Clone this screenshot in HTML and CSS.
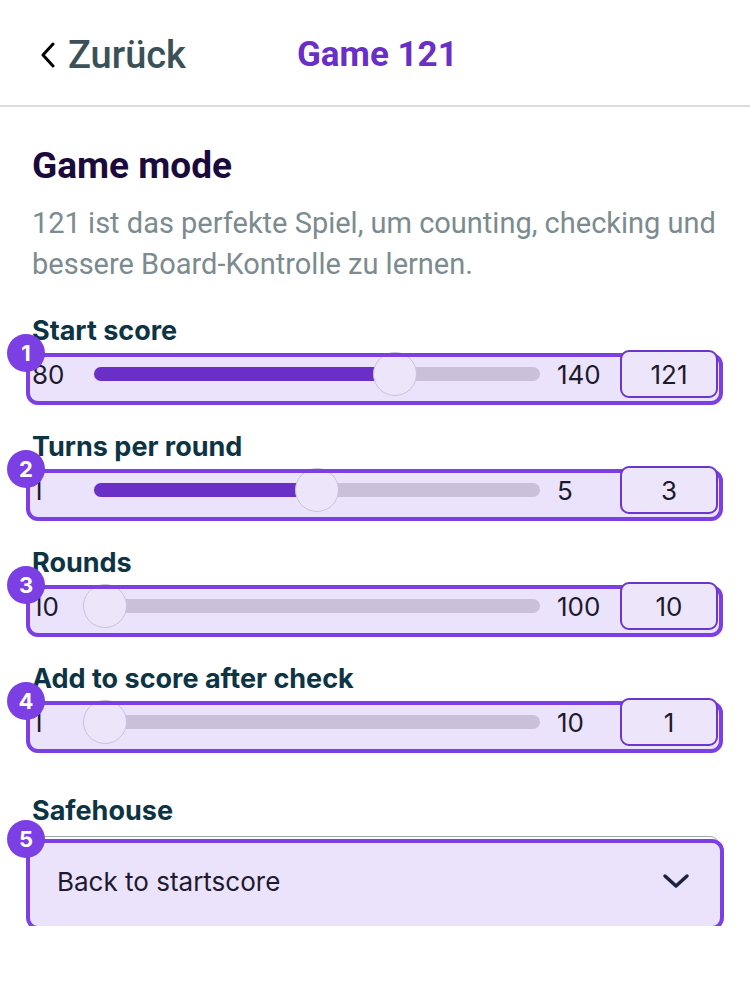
FILE: index.html
```html
<!DOCTYPE html>
<html lang="de">
<head>
    <meta charset="UTF-8">
    <meta name="viewport" content="width=device-width, initial-scale=1.0">
    <title>Game 121</title>
    <link rel="stylesheet" href="styles.css">
</head>
<body>
    <div class="topbar">
        <div class="back">
            <svg class="back-icon" width="16" height="26" viewBox="0 0 16 26">
                <path d="M13 2 L3 13 L13 24" fill="none" stroke="#000" stroke-width="3" stroke-linecap="round" stroke-linejoin="round"/>
            </svg>
            <span>Zurück</span>
        </div>
        <div class="title">Game 121</div>
    </div>

    <div class="content">
        <h1>Game mode</h1>
        <p class="intro">121 ist das perfekte Spiel, um counting, checking und bessere Board-Kontrolle zu lernen.</p>

        <div class="fields">
            <div class="field">
                <div class="label">Start score</div>
                <div class="slider-row">
                    <span class="annot"><span class="badge">1</span></span>
                    <span class="min">80</span>
                    <div class="track" style="--p: 0.683"><div class="fill"></div><div class="thumb"></div></div>
                    <span class="max">140</span>
                    <span class="value">121</span>
                </div>
            </div>

            <div class="field">
                <div class="label">Turns per round</div>
                <div class="slider-row">
                    <span class="annot"><span class="badge">2</span></span>
                    <span class="min">1</span>
                    <div class="track" style="--p: 0.5"><div class="fill"></div><div class="thumb"></div></div>
                    <span class="max">5</span>
                    <span class="value">3</span>
                </div>
            </div>

            <div class="field">
                <div class="label">Rounds</div>
                <div class="slider-row">
                    <span class="annot"><span class="badge">3</span></span>
                    <span class="min">10</span>
                    <div class="track" style="--p: 0"><div class="thumb"></div></div>
                    <span class="max">100</span>
                    <span class="value">10</span>
                </div>
            </div>

            <div class="field">
                <div class="label">Add to score after check</div>
                <div class="slider-row">
                    <span class="annot"><span class="badge">4</span></span>
                    <span class="min">1</span>
                    <div class="track" style="--p: 0"><div class="thumb"></div></div>
                    <span class="max">10</span>
                    <span class="value">1</span>
                </div>
            </div>

            <div class="field field-select">
                <div class="label">Safehouse</div>
                <div class="select">
                    <span class="annot"><span class="badge">5</span></span>
                    <span class="select-text">Back to startscore</span>
                    <svg class="select-icon" width="28" height="16" viewBox="0 0 28 16">
                        <path d="M3 3 L14 13 L25 3" fill="none" stroke="#1c2240" stroke-width="3.5" stroke-linecap="round" stroke-linejoin="round"/>
                    </svg>
                </div>
            </div>
        </div>
    </div>
</body>
</html>
```

FILE: styles.css
```css
body {
    margin: 0;
    background: #fff;
    font-family: Inter, "Noto Sans", sans-serif;
}
.topbar {
    height: 107px;
    box-sizing: border-box;
    padding: 4px 0 0 40px;
    border-bottom: 2px solid #dcdcdc;
    display: flex;
    align-items: center;
}
.back {
    width: 257px;
    display: flex;
    align-items: center;
    gap: 12px;
    font-family: Roboto, sans-serif;
    font-weight: 500;
    font-size: 38px;
    color: #3b5159;
}
.title {
    font-family: Roboto, sans-serif;
    font-weight: 700;
    font-size: 35px;
    color: #6a2fc6;
}
.content {
    padding: 0 32px;
}
h1 {
    margin: 36px 0 0;
    font-family: Roboto, sans-serif;
    font-weight: 700;
    font-size: 37px;
    line-height: 46px;
    color: #1b0b3d;
}
.intro {
    margin: 14px 0 0;
    font-family: Roboto, sans-serif;
    font-size: 29px;
    line-height: 41px;
    color: #7b8b90;
}
.fields {
    margin-top: 30px;
    display: flex;
    flex-direction: column;
    gap: 33px;
}
.label {
    font-weight: 700;
    font-size: 27px;
    line-height: 32px;
    color: #0d3444;
    margin-bottom: 3px;
}
.slider-row {
    position: relative;
    z-index: 0;
    display: flex;
    align-items: center;
    height: 48px;
    font-size: 26px;
    color: #1d1a2c;
}
.annot {
    position: absolute;
    left: -6px;
    right: -5px;
    top: 3px;
    bottom: -7px;
    background: #ebe2fb;
    border-radius: 12px;
}
.annot::after {
    content: "";
    position: absolute;
    inset: 0;
    border: 4px solid #7b3fe4;
    border-radius: 12px;
    z-index: 2;
}
.badge {
    position: absolute;
    left: -19px;
    top: -19px;
    width: 38px;
    height: 38px;
    border-radius: 50%;
    background: #7b3fe4;
    color: #fff;
    font-weight: 700;
    font-size: 22px;
    display: flex;
    align-items: center;
    justify-content: center;
    z-index: 4;
}
.min {
    width: 62px;
    position: relative;
    z-index: 1;
}
.track {
    flex: 1;
    height: 14px;
    border-radius: 7px;
    background: #cac0d9;
    position: relative;
    z-index: 1;
}
.fill {
    position: absolute;
    left: 0;
    top: 0;
    bottom: 0;
    width: calc(11px + var(--p) * (100% - 22px));
    background: #6a2fc6;
    border-radius: 7px;
}
.thumb {
    position: absolute;
    top: 50%;
    left: calc(11px + var(--p) * (100% - 22px));
    width: 44px;
    height: 44px;
    margin: -22px 0 0 -22px;
    box-sizing: border-box;
    border-radius: 50%;
    background: #ede6fb;
    border: 1.5px solid #cbc3d9;
}
.max {
    width: 80px;
    padding-left: 17px;
    box-sizing: border-box;
    position: relative;
    z-index: 1;
}
.value {
    width: 98px;
    height: 48px;
    box-sizing: border-box;
    border: 2px solid #6b36cc;
    border-radius: 9px;
    background: #ede6fb;
    display: flex;
    align-items: center;
    justify-content: center;
    position: relative;
    z-index: 3;
}
.field-select {
    margin-top: 16px;
}
.field-select .label {
    margin-bottom: 9px;
}
.select {
    position: relative;
    z-index: 0;
    height: 90px;
    margin: 0 -2px;
    box-sizing: border-box;
    border: 1.5px solid #9ea6b0;
    border-radius: 10px;
    display: flex;
    align-items: center;
    justify-content: space-between;
    padding: 0 29px 0 26px;
    font-size: 26px;
    color: #1d1a2e;
}
.select .annot {
    left: -5px;
    right: -5px;
    top: 2px;
    bottom: -5px;
}
.select-text,
.select-icon {
    position: relative;
    z-index: 3;
}
```
